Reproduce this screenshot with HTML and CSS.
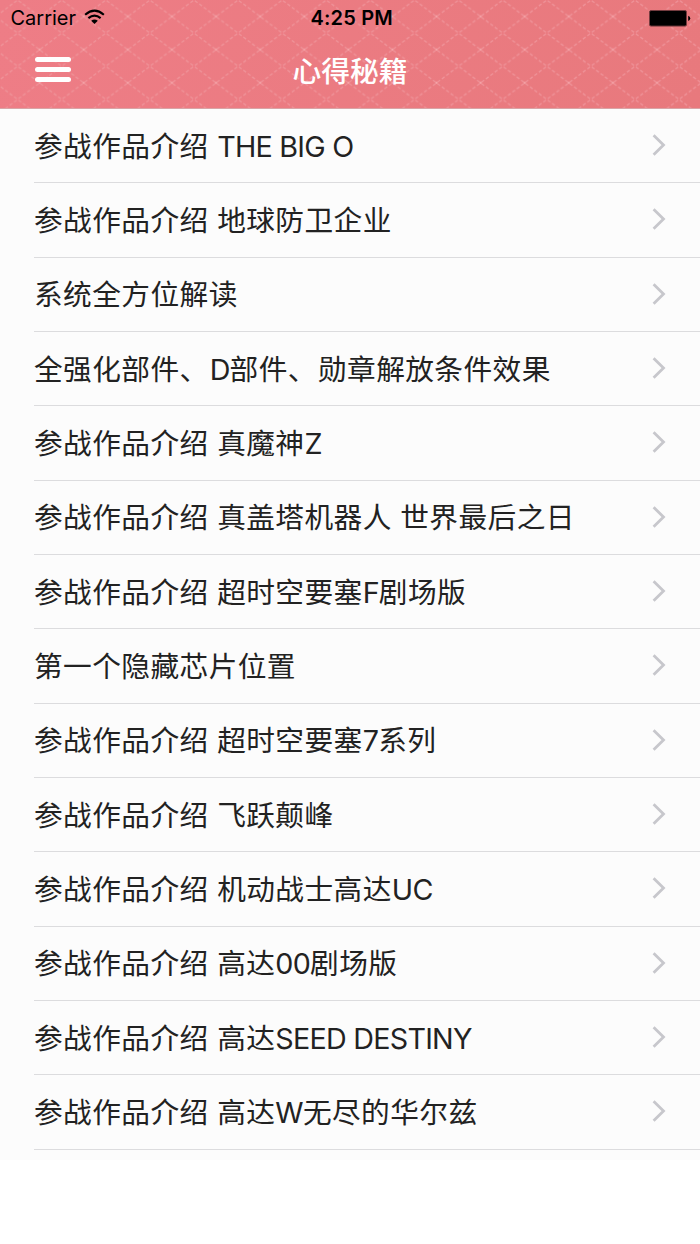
FILE: index.html
```
<!DOCTYPE html>
<html lang="zh-CN">
<head>
  <meta charset="UTF-8">
  <meta name="viewport" content="width=device-width, initial-scale=1.0">
  <title>心得秘籍</title>
  <link rel="stylesheet" href="styles.css">
</head>
<body>
  <header class="header">
    <!-- Stitched diamond background -->
    <svg class="header-pattern" width="700" height="108">
      <defs>
        <pattern id="stitch" width="44.1" height="33.15" patternUnits="userSpaceOnUse" patternTransform="translate(17.6 0)">
          <path d="M0 0L44.1 33.15M44.1 0L0 33.15" fill="none" stroke="#ef9399" stroke-width="1.3" stroke-dasharray="3.3 2.217" stroke-dashoffset="-1.1"/>
          <circle cx="22.05" cy="16.57" r="1.1" fill="#f5a6aa"/>
        </pattern>
      </defs>
      <rect width="700" height="108" fill="url(#stitch)"/>
    </svg>

    <!-- Status bar -->
    <div class="status-bar">
      <div class="status-left">
        <span>Carrier</span>
        <svg class="wifi" width="21" height="16" viewBox="0 0 22 16">
          <path d="M1.2 5.6Q11-2.8 20.8 5.6M4.6 9.2Q11 3.8 17.4 9.2" fill="none" stroke="#000" stroke-width="2.2"/>
          <path d="M7.5 12Q11 9.2 14.5 12L11 15.4Z"/>
        </svg>
      </div>
      <div class="status-time">4:25 PM</div>
      <div class="status-right">
        <svg width="42" height="17" viewBox="0 0 42 17">
          <rect x="0.5" y="0.5" width="37" height="15.6" rx="1.5" fill="#000" stroke="#743c3f"/>
          <path d="M39.2 5.7Q41.2 6.2 41.2 8.3T39.2 10.9Z"/>
        </svg>
      </div>
    </div>

    <!-- Nav bar -->
    <div class="nav-bar">
      <button class="menu-btn" aria-label="菜单">
        <span></span>
        <span></span>
        <span></span>
      </button>
      <h1>心得秘籍</h1>
    </div>
  </header>

  <ul class="list" id="list">
    <!-- Rows will be dynamically inserted here -->
  </ul>

  <script>
    const articles = [
      "参战作品介绍 THE BIG O",
      "参战作品介绍 地球防卫企业",
      "系统全方位解读",
      "全强化部件、D部件、勋章解放条件效果",
      "参战作品介绍 真魔神Z",
      "参战作品介绍 真盖塔机器人 世界最后之日",
      "参战作品介绍 超时空要塞F剧场版",
      "第一个隐藏芯片位置",
      "参战作品介绍 超时空要塞7系列",
      "参战作品介绍 飞跃颠峰",
      "参战作品介绍 机动战士高达UC",
      "参战作品介绍 高达00剧场版",
      "参战作品介绍 高达SEED DESTINY",
      "参战作品介绍 高达W无尽的华尔兹",
    ];

    // Latin letters and digits are set tighter than the Chinese text
    function formatTitle(title) {
      return title
        .replace(/[A-Z0-9]+( [A-Z0-9]+)*/g, '<span class="latin">$&</span>')
        .replace(/、/g, '<span class="comma">、</span>');
    }

    document.querySelector("#list").innerHTML = articles.map((title) => `
      <li class="row">
        <span class="title">${formatTitle(title)}</span>
        <svg class="arrow" width="14" height="24" viewBox="0 0 14 24">
          <path d="M1.6 2.2L11.5 12L1.6 21.8" fill="none" stroke="#c7c7cc" stroke-width="2.8"/>
        </svg>
      </li>
    `).join("");
  </script>
</body>
</html>
```

FILE: styles.css
```
body {
  margin: 0;
  background: #fff;
  color: #222;
  font-family: Inter, "Noto Sans CJK SC", sans-serif;
}

.header {
  position: relative;
  height: 108px;
  background: linear-gradient(100deg, #ee7d86, #e8797d);
  border-bottom: 0.6px solid #d9a4a6;
}

.header-pattern {
  position: absolute;
  top: 0;
  left: 0;
}

.status-bar {
  position: relative;
  display: grid;
  grid-template-columns: 1fr auto 1fr;
  align-items: center;
  height: 36px;
  padding: 0 9px 0 10.5px;
  color: #000;
  font-size: 20px;
}

.status-left {
  display: flex;
  align-items: center;
  gap: 8px;
}

.wifi {
  margin-top: -3px;
}

.status-time {
  padding-left: 2px;
  font-weight: 600;
  letter-spacing: 0.2px;
}

.status-right {
  display: flex;
  justify-content: flex-end;
}

.nav-bar {
  position: relative;
  display: grid;
  grid-template-columns: 1fr auto 1fr;
  align-items: center;
  height: 72px;
  padding: 0 34px;
}

.menu-btn {
  display: flex;
  flex-direction: column;
  gap: 4.6px;
  width: 36.4px;
  margin: -5px 0 0 0.5px;
  padding: 0;
  border: none;
  background: none;
}

.menu-btn span {
  width: 100%;
  height: 5.6px;
  border-radius: 2.5px;
  background: #fff;
}

.nav-bar h1 {
  margin: 0;
  color: #fff;
  font-size: 28.8px;
  font-weight: 500;
  line-height: 72px;
}

.list {
  margin: 0;
  padding: 0 0 10.5px 34px;
  list-style: none;
  background: #fcfcfc;
}

.row {
  display: flex;
  align-items: center;
  justify-content: space-between;
  box-sizing: border-box;
  height: 74.33px;
  padding: 0 34px 1px 0;
  border-bottom: 1px solid #dcdcde;
}

.title {
  margin-top: -2px;
  font-size: 28.7px;
  letter-spacing: 0.42px;
  white-space: nowrap;
}

.latin {
  letter-spacing: -0.75px;
}

.comma {
  letter-spacing: 1.4px;
}
```
